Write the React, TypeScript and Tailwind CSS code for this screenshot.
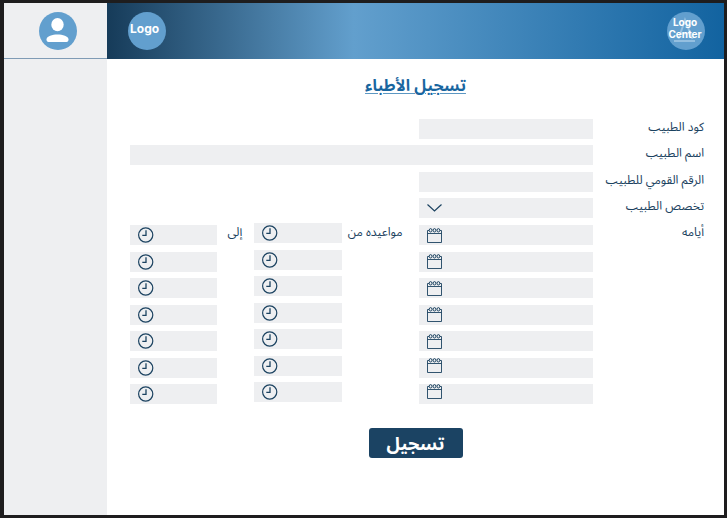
import React from "react";

const DAYS = [1, 2, 3, 4, 5, 6, 7];
const columns = "grid grid-cols-[111px_minmax(0,2fr)_77px_minmax(0,1fr)_37px_minmax(0,1fr)] pr-5 pl-[23px]";
const stack = "flex h-[179px] flex-col justify-between";
const field = "flex h-5 w-full gap-2 bg-[#eeeff1] px-2";
const input = "h-full min-w-0 flex-1 bg-transparent text-xs text-[#1b4260] outline-none";
const plainInput = "h-5 w-full bg-[#eeeff1] px-2 text-xs text-[#1b4260] outline-none";
const label = "text-xs leading-4 text-[#1b4260] whitespace-nowrap";

function CalendarIcon() {
  return (
    <svg viewBox="0 0 15 15" className="h-[15px] w-[15px] shrink-0" fill="none" stroke="#1b4260" aria-hidden="true">
      <path d="M2 2.500H.5v12h14v-12H13M.5 5.500h14" strokeWidth="0.9" />
      <ellipse cx="3.6" cy="2.3" rx="1.4" ry="1.7" />
      <ellipse cx="7.5" cy="2.3" rx="1.4" ry="1.7" />
      <ellipse cx="11.4" cy="2.3" rx="1.4" ry="1.7" />
    </svg>
  );
}

function ClockIcon() {
  return (
    <svg viewBox="0 0 16 16" className="h-4 w-4 shrink-0" fill="none" stroke="#1b4260" aria-hidden="true">
      <circle cx="7.700" cy="8" r="7.100" strokeWidth="1.2" />
      <path d="M8 3.300v5H4.300" strokeWidth="1.3" />
    </svg>
  );
}

function TimeFields({ id, name }: { id: string; name: string }) {
  return (
    <>
      {DAYS.map((day) => (
        <div key={day} className={`${field} items-center`}>
          <input id={`${id}-${day}`} aria-label={`${name} ${day}`} className={input} />
          <ClockIcon />
        </div>
      ))}
    </>
  );
}

export default function App() {
  return (
    <div className="flex min-h-screen bg-[#1e1d1e] pt-[3px] pr-[3px] pb-[3px] pl-1 font-['Noto_Sans','Noto_Sans_Arabic',sans-serif]">
      <aside className="w-[103px] shrink-0 bg-[#eeeff1]">
        <div className="flex h-14 items-center justify-center border-b border-[#7f9bb5] pl-1">
          <button type="button" aria-label="الحساب" className="h-[38px] w-[38px] rounded-full bg-[#629fce]">
            <svg viewBox="0 0 38 38" fill="#fff" aria-hidden="true">
              <ellipse cx="18.500" cy="12.700" rx="6.2" ry="6.6" />
              <path d="M7.500 27.500c0-3.500 6-5 11-5s11 1.500 11 5c0 1.700-.7 2.400-2 2.400h-18c-1.300 0-2-.7-2-2.400z" />
            </svg>
          </button>
        </div>
      </aside>
      <div className="flex min-w-0 flex-1 flex-col bg-white">
        <header className="flex h-14 items-center justify-between bg-[linear-gradient(90deg,#163b59_0%,#629fcd_40%,#1263a0_100%)] pr-[19px] pl-[21px] font-[Inter] text-white">
          <div className="flex h-[38px] w-[38px] items-center rounded-full bg-[#629fce] pb-1 pl-[2px] text-xs font-bold">
            Logo
          </div>
          <div className="relative flex h-[38px] w-[38px] items-center justify-center rounded-full bg-[#629fce] pr-[2px] pb-[6px]">
            <svg viewBox="0 0 38 38" className="absolute inset-0" fill="none" stroke="#94bfe0" strokeWidth="2" aria-hidden="true">
              <path d="M11.500 27 18 8l7.500 19M14 21.500h9M7 29h21" />
            </svg>
            <span className="relative text-center text-[10px] leading-3 font-bold">
              Logo
              <br />
              Center
            </span>
          </div>
        </header>
        <main dir="rtl" className="flex flex-col pt-[14px]">
          <h1 className="text-center text-base leading-6 font-bold text-[#19669f] underline decoration-[#5c97c2] decoration-1 underline-offset-2">
            تسجيل الأطباء
          </h1>
          <form className="flex flex-col pt-[22px]" onSubmit={(e) => e.preventDefault()}>
            <div className={`${columns} h-[99px] content-between`}>
              <label htmlFor="code" className={label}>كود الطبيب</label>
              <input id="code" className={plainInput} />
              <label htmlFor="name" className={`${label} col-start-1`}>اسم الطبيب</label>
              <input id="name" className={`${plainInput} col-span-5`} />
              <label htmlFor="national" className={`${label} col-start-1`}>الرقم القومي للطبيب</label>
              <input id="national" className={plainInput} />
              <label htmlFor="speciality" className={`${label} col-start-1`}>تخصص الطبيب</label>
              <div className={`${field} items-center`}>
                <select id="speciality" className={`${input} appearance-none`}>
                  <option value=""></option>
                </select>
                <svg viewBox="0 0 15 8" className="h-2 w-[15px] shrink-0" fill="none" stroke="#1b4260" strokeWidth="1.2" aria-hidden="true">
                  <path d="m.5.5 7 6.500 7-6.500" />
                </svg>
              </div>
            </div>
            <div className={`${columns} mt-[5px] h-[181px]`}>
              <label htmlFor="day-1" className={`${label} pt-px`}>أيامه</label>
              <div className={`${stack} self-end`}>
                {DAYS.map((day) => (
                  <div key={day} className={`${field} ${day > 5 ? "items-start" : "items-center"}`}>
                    <input id={`day-${day}`} aria-label={`أيامه ${day}`} className={input} />
                    <CalendarIcon />
                  </div>
                ))}
              </div>
              <label htmlFor="from-1" className={`${label} pt-px pr-4`}>مواعيده من</label>
              <div className={stack}>
                <TimeFields id="from" name="مواعيده من" />
              </div>
              <label htmlFor="to-1" className={`${label} pt-px pr-3`}>إلى</label>
              <div className={`${stack} self-end`}>
                <TimeFields id="to" name="إلى" />
              </div>
            </div>
            <button type="submit" className="mt-6 h-[30px] w-[94px] self-center rounded-[3px] bg-[#1b4363] text-lg leading-6 font-bold text-white">
              تسجيل
            </button>
          </form>
        </main>
      </div>
    </div>
  );
}
